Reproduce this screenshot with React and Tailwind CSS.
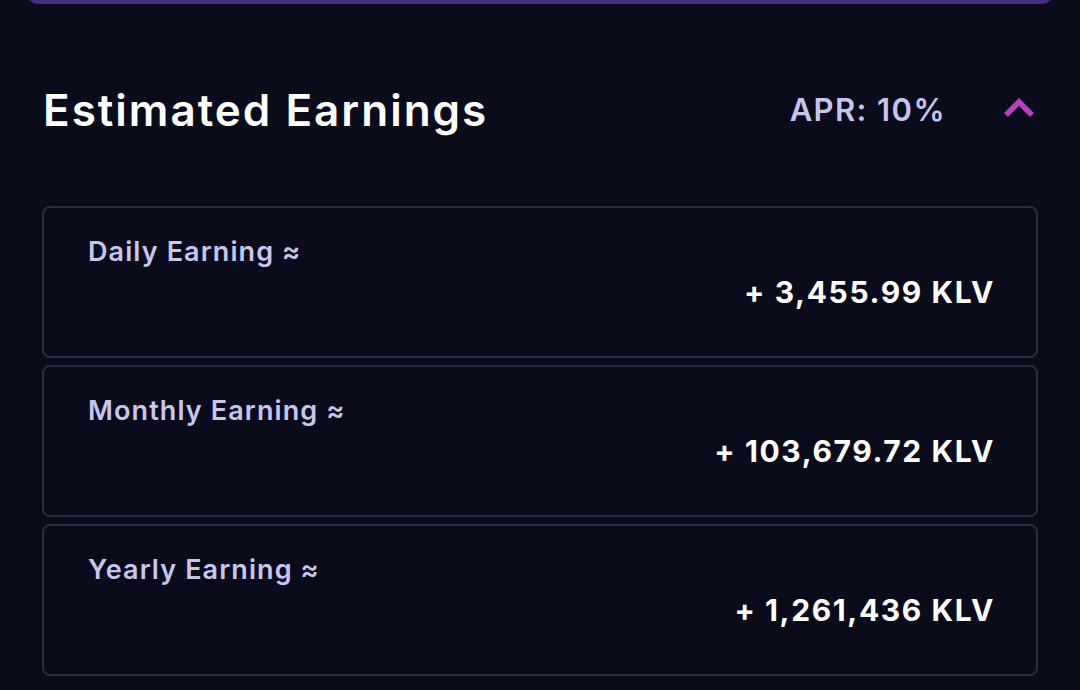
import React from 'react'

const earnings = [
    { label: 'Daily Earning ≈', value: '+ 3,455.99 KLV' },
    { label: 'Monthly Earning ≈', value: '+ 103,679.72 KLV' },
    { label: 'Yearly Earning ≈', value: '+ 1,261,436 KLV' },
]

function App() {
    return (
        <div className="h-[690px] w-[1080px] overflow-hidden bg-[#0b0c1b] font-['Inter',sans-serif] text-white">
            {/* bottom of the button above */}
            <div className="mx-[25px] -mt-[20px] h-[24px] rounded-b-[14px] bg-[#44307f]" />

            <div className="px-[42px]">
                <div className="mt-[78px] flex h-[56px] items-center justify-between">
                    <h2 className="pl-[1px] text-[44px] font-semibold tracking-[2px]">Estimated Earnings</h2>
                    <div className="flex items-center">
                        <span className="text-[31px] font-semibold tracking-[1.4px] text-[#c8c5ec]">APR: 10%</span>
                        <svg
                            width="34"
                            height="22"
                            viewBox="0 0 34 22"
                            className="ml-[56px] mr-[2px] -mt-[4px]"
                            fill="none"
                        >
                            <path d="M4 18 L17 5 L30 18" stroke="#b842bb" strokeWidth="5.5" strokeLinejoin="miter" />
                        </svg>
                    </div>
                </div>

                <div className="mt-[68px] flex flex-col gap-[7px]">
                    {earnings.map((item) => (
                        <div
                            key={item.label}
                            className="h-[152px] rounded-[8px] border-2 border-[#2c2c40] px-[44px] pt-[24px]"
                        >
                            <p className="text-[27px] font-semibold tracking-[1.1px] text-[#c9c6ec]">{item.label}</p>
                            <p className="-mr-[3px] -mt-[3px] text-right text-[30px] font-bold tracking-[1.6px]">{item.value}</p>
                        </div>
                    ))}
                </div>
            </div>
        </div>
    )
}

export default App
